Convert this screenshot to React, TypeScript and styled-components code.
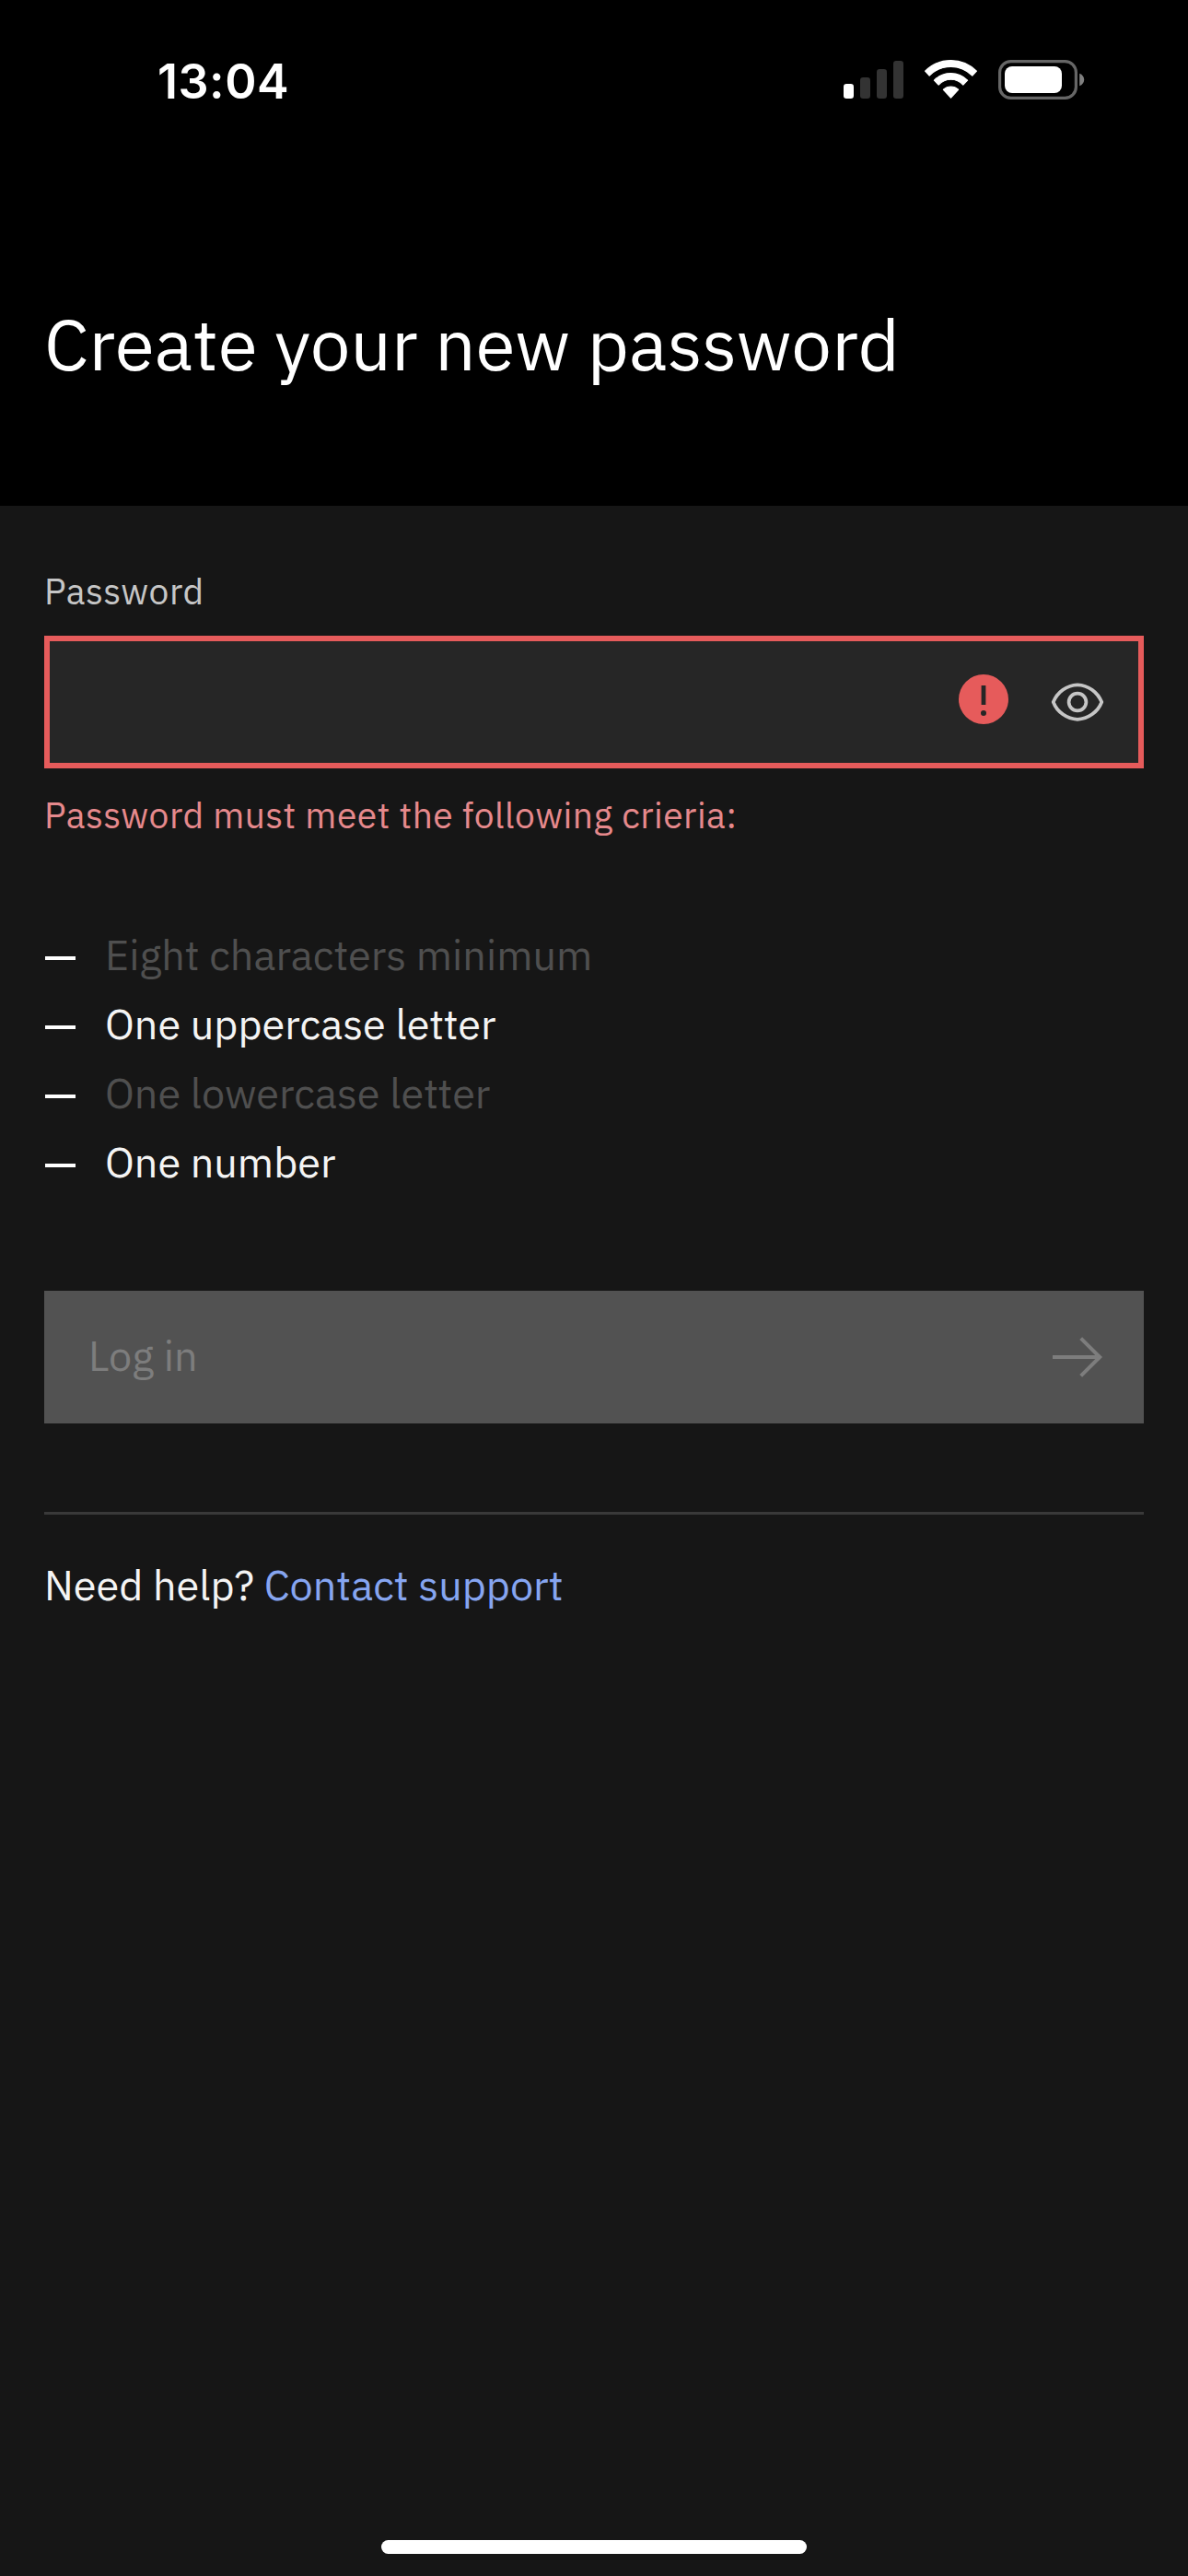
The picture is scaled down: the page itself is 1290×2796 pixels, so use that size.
import React from "react";
import styled, { createGlobalStyle } from "styled-components";

const sans = `"IBM Plex Sans", "Open Sans", "Noto Sans", sans-serif`;

const colors = {
  header: "#000000",
  page: "#161616",
  field: "#262626",
  error: "#e65b5b",
  errorText: "#e6898c",
  textPrimary: "#f4f4f4",
  textSecondary: "#c6c6c6",
  textDisabled: "#4f4f4f",
  buttonDisabled: "#525252",
  onButtonDisabled: "#7d7d7d",
  border: "#393939",
  link: "#86a5f0",
};

const GlobalStyle = createGlobalStyle`
  *, *::before, *::after { box-sizing: border-box; }
  body { margin: 0; background: ${colors.page}; }
`;

const Screen = styled.div`
  display: flex;
  flex-direction: column;
  width: 1290px;
  height: 2796px;
  background: ${colors.page};
  color: ${colors.textPrimary};
  font-family: ${sans};
  font-size: 45px;
  font-weight: 400;
`;

const Header = styled.header`
  height: 549px;
  background: ${colors.header};
  color: #ffffff;
`;

const StatusBar = styled.div`
  display: flex;
  justify-content: space-between;
  height: 177px;
  padding: 57px 112px 0 171px;
`;

const Clock = styled.time`
  font-family: Inter, sans-serif;
  font-size: 52px;
  font-weight: 600;
  line-height: 64px;
  letter-spacing: 0.5px;
`;

const StatusIcons = styled.div`
  display: flex;
  align-items: flex-start;
  padding-top: 7px;
  gap: 22px;

  svg {
    display: block;
  }
`;

const Title = styled.h1`
  margin: 0;
  padding: 146px 48px 0;
  font-size: 78px;
  font-weight: 400;
  line-height: 100px;
  letter-spacing: 0.1px;
`;

const Content = styled.main`
  display: flex;
  flex: 1;
  flex-direction: column;
  padding: 66px 48px 0;
`;

const FieldText = styled.span<{ $tone: string }>`
  color: ${(p) => p.$tone};
  font-size: 39px;
  line-height: 54px;
  letter-spacing: 0.47px;
`;

const Field = styled.div`
  display: flex;
  align-items: center;
  justify-content: flex-end;
  gap: 42px;
  height: 144px;
  margin: 21px 0 24px;
  padding: 0 36px;
  border: 6px solid ${colors.error};
  background: ${colors.field};
`;

const FieldIcon = styled.svg<{ $lift?: number; $tone: string }>`
  display: block;
  width: 60px;
  height: 60px;
  margin-bottom: ${(p) => (p.$lift ?? 0) * 2}px;
  fill: ${(p) => p.$tone};
`;

const Criteria = styled.ul`
  display: flex;
  flex-direction: column;
  margin: 87px 0 0;
  padding: 0;
  list-style: none;
`;

const Criterion = styled.li<{ $met: boolean }>`
  display: flex;
  align-items: center;
  gap: 32px;
  height: 75px;
  line-height: 75px;
  color: ${(p) => (p.$met ? colors.textDisabled : colors.textPrimary)};

  &::before {
    content: "";
    width: 33px;
    height: 4px;
    margin: 6px 0 0 1px;
    background: #ffffff;
  }
`;

const SubmitButton = styled.button`
  display: flex;
  align-items: center;
  justify-content: space-between;
  height: 144px;
  margin: 102px 0 0;
  padding: 0 42px 0 48px;
  border: 0;
  border-radius: 0;
  background: ${colors.buttonDisabled};
  color: ${colors.onButtonDisabled};
  font: inherit;
`;

const ButtonLabel = styled.span`
  padding-bottom: 4px;
`;

const Arrow = styled.svg`
  width: 60px;
  height: 60px;
  fill: none;
  stroke: currentColor;
  stroke-width: 4;
`;

const Help = styled.p`
  margin: 96px 0 0;
  padding-top: 43px;
  border-top: 3px solid ${colors.border};
  line-height: 66px;
`;

const HelpLink = styled.a`
  color: ${colors.link};
  text-decoration: none;
`;

const HomeIndicator = styled.div`
  width: 462px;
  height: 15px;
  margin: auto auto 24px;
  border-radius: 8px;
  background: #ffffff;
`;

const criteria = [
  { text: "Eight characters minimum", met: true },
  { text: "One uppercase letter", met: false },
  { text: "One lowercase letter", met: true },
  { text: "One number", met: false },
];

const SignalIcon = () => (
  <svg width="66" height="44" viewBox="0 0 66 44">
    <rect x="1" y="27" width="11" height="16" rx="3.2" fill="#fff" />
    <rect x="19" y="20" width="11" height="23" rx="3.2" fill="#333" />
    <rect x="37" y="11" width="11" height="32" rx="3.2" fill="#333" />
    <rect x="55" y="2" width="11" height="41" rx="3.2" fill="#333" />
  </svg>
);

const WifiIcon = () => (
  <svg width="59" height="44" viewBox="0 0 59 44" fill="#fff" stroke="#fff" strokeWidth="1.2" strokeLinejoin="round">
    <path d="M1.6 13.2A39.2 39.2 0 0 1 57.4 13.2L52.8 18.2A32.6 32.6 0 0 0 6.2 18.2Z" />
    <path d="M11.4 23.2A25.2 25.2 0 0 1 47.6 23.2L42.8 28.1A18 18 0 0 0 16.2 28.1Z" />
    <path d="M21.4 33.3A11.6 11.6 0 0 1 37.6 33.3L29.5 42.2Z" />
  </svg>
);

const BatteryIcon = () => (
  <svg width="94" height="44" viewBox="0 0 94 44">
    <rect x="1.6" y="2.6" width="82.8" height="39.8" rx="12" fill="none" stroke="#666" strokeWidth="3.2" />
    <rect x="7" y="8" width="62" height="29" rx="8" fill="#fff" />
    <path d="M88.2 15.8c3 1 5 3.8 5 6.7s-2 5.7-5 6.7z" fill="#808080" />
  </svg>
);

export default function App() {
  return (
    <Screen>
      <GlobalStyle />
      <Header>
        <StatusBar>
          <Clock>13:04</Clock>
          <StatusIcons>
            <SignalIcon />
            <WifiIcon />
            <BatteryIcon />
          </StatusIcons>
        </StatusBar>
        <Title>Create your new password</Title>
      </Header>
      <Content>
        <FieldText $tone={colors.textSecondary}>Password</FieldText>
        <Field>
          <FieldIcon viewBox="0 0 20 20" $tone={colors.error} $lift={3}>
            <path
              fillRule="evenodd"
              d="M10 1a9 9 0 1 0 0 18a9 9 0 0 0 0-18ZM9.2 5h1.6v7h-1.6ZM10 14a1 1 0 1 1 0 2a1 1 0 0 1 0-2Z"
            />
          </FieldIcon>
          <FieldIcon viewBox="0 0 32 32" $tone={colors.textSecondary}>
            <path d="M30.94 15.66A16.69 16.69 0 0 0 16 5 16.69 16.69 0 0 0 1.06 15.66a1 1 0 0 0 0 .68A16.69 16.69 0 0 0 16 27 16.69 16.69 0 0 0 30.94 16.34a1 1 0 0 0 0-.68ZM16 25c-5.3 0-10.9-3.93-12.93-9C5.1 10.93 10.7 7 16 7s10.9 3.93 12.93 9C26.9 21.07 21.3 25 16 25Z" />
            <path d="M16 10a6 6 0 1 0 6 6 6 6 0 0 0-6-6Zm0 10a4 4 0 1 1 4-4 4 4 0 0 1-4 4Z" />
          </FieldIcon>
        </Field>
        <FieldText $tone={colors.errorText}>Password must meet the following crieria:</FieldText>
        <Criteria>
          {criteria.map((c) => (
            <Criterion key={c.text} $met={c.met}>
              {c.text}
            </Criterion>
          ))}
        </Criteria>
        <SubmitButton disabled>
          <ButtonLabel>Log in</ButtonLabel>
          <Arrow viewBox="0 0 60 60">
            <path d="M3 30H54" />
            <path d="M33.7 9.7L54.2 30L33.7 50.3" />
          </Arrow>
        </SubmitButton>
        <Help>
          Need help? <HelpLink>Contact support</HelpLink>
        </Help>
        <HomeIndicator />
      </Content>
    </Screen>
  );
}
